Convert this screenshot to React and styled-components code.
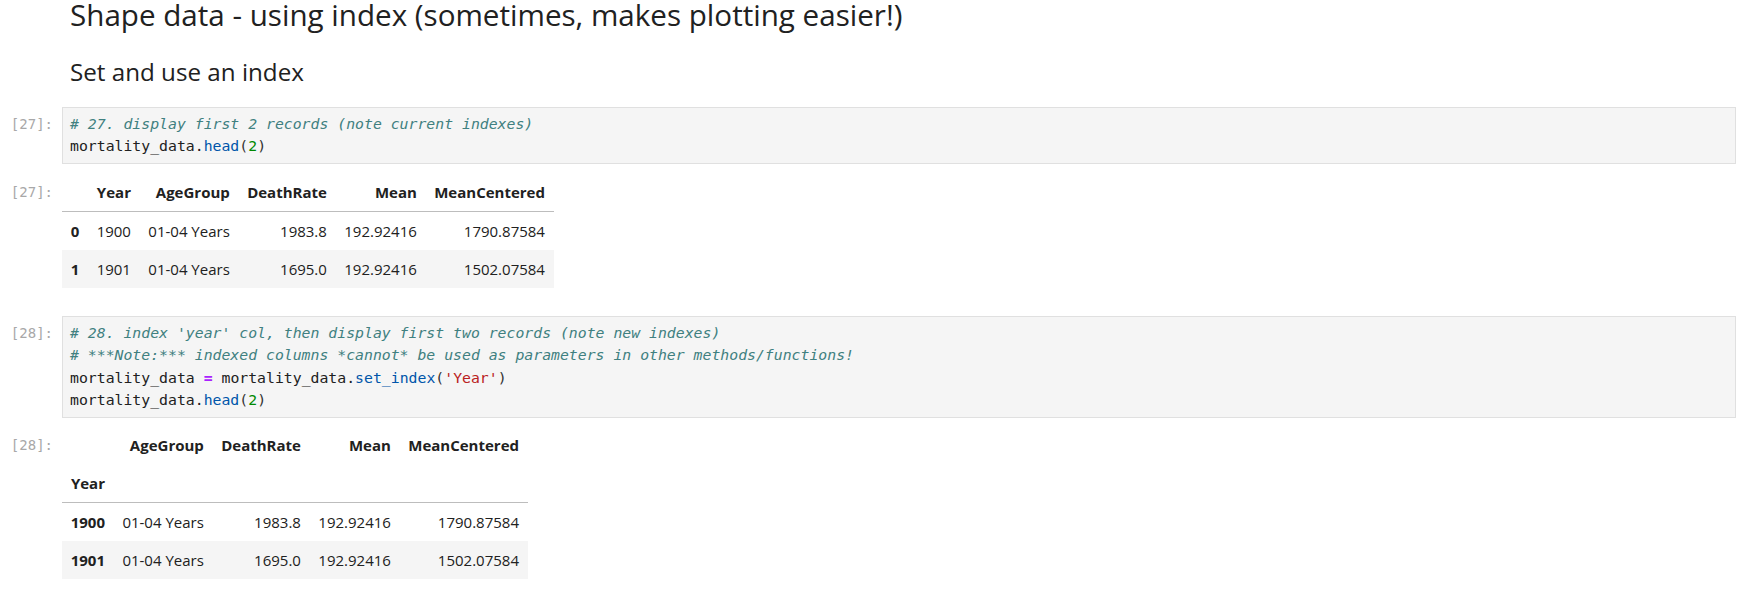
import React from 'react';
import styled, {createGlobalStyle, css} from 'styled-components';

const GlobalStyle = createGlobalStyle`
  body {
    margin: 0;
    background: #ffffff;
    font-family: "Open Sans", "Noto Sans", sans-serif;
    color: #212121;
  }
`;

const Notebook = styled.div`
  display: flex;
  flex-direction: column;
  padding-right: 8px;
`;

const Cell = styled.div`
  display: grid;
  grid-template-columns: 62px 1fr;
  align-items: start;
  margin-top: ${props => props.$top || 0}px;
`;

const Prompt = styled.div`
  font-family: "DejaVu Sans Mono", "Liberation Mono", monospace;
  font-size: 14px;
  color: #a8a8a8;
  text-align: right;
  padding-right: 9px;
  line-height: ${props => (props.$out ? '38px' : '22.5px')};
  padding-top: ${props => (props.$out ? 0 : 6)}px;
  white-space: pre;
`;

const Markdown = styled.div`
  padding-left: 8px;
`;

const Title = styled.h2`
  margin: 0;
  font-size: 29.6px;
  font-weight: 400;
  line-height: 30px;
  color: #212121;
`;

const Subtitle = styled.h3`
  margin: 27.3px 0 0;
  font-size: 24.2px;
  font-weight: 400;
  line-height: 30px;
  color: #212121;
`;

const CodeBox = styled.pre`
  margin: 0;
  background: #f5f5f5;
  border: 1px solid #e0e0e0;
  padding: 5px 7px;
  font-family: "DejaVu Sans Mono", "Liberation Mono", monospace;
  font-size: 14.8px;
  line-height: 22.5px;
  color: #212121;
`;

const tokenColors = {
  comment: css`
    color: #408080;
    font-style: italic;
  `,
  prop: css`color: #0055aa;`,
  num: css`color: #008800;`,
  str: css`color: #ba2121;`,
  op: css`
    color: #aa22ff;
    font-weight: bold;
  `,
  bracket: css`color: #333333;`,
};

const Tok = styled.span`
  ${props => tokenColors[props.$k]}
`;

const Table = styled.table`
  justify-self: start;
  border-collapse: collapse;
  border-spacing: 0;
  font-size: 15px;
  color: #212121;
`;

const Cellbase = css`
  height: 38px;
  padding: 0 8.7px;
  text-align: right;
  vertical-align: middle;
  white-space: nowrap;
`;

const Th = styled.th`
  ${Cellbase};
  font-weight: 700;
`;

const Td = styled.td`
  ${Cellbase};
  font-weight: 400;
`;

const HeadRow = styled.tr`
  ${props =>
    props.$last &&
    css`
      border-bottom: 1px solid #bdbdbd;
    `}
`;

const BodyRow = styled.tr`
  background: ${props => (props.$stripe ? '#f5f5f5' : 'transparent')};
`;

const rows = [
  {idx: '0', year: '1900', age: '01-04 Years', rate: '1983.8', mean: '192.92416', centered: '1790.87584'},
  {idx: '1', year: '1901', age: '01-04 Years', rate: '1695.0', mean: '192.92416', centered: '1502.07584'},
];

function FirstTable() {
  return (
    <Table>
      <thead>
        <HeadRow $last>
          <Th></Th>
          <Th>Year</Th>
          <Th>AgeGroup</Th>
          <Th>DeathRate</Th>
          <Th>Mean</Th>
          <Th>MeanCentered</Th>
        </HeadRow>
      </thead>
      <tbody>
        {rows.map((r, i) => (
          <BodyRow key={r.idx} $stripe={i % 2 === 1}>
            <Th>{r.idx}</Th>
            <Td>{r.year}</Td>
            <Td>{r.age}</Td>
            <Td>{r.rate}</Td>
            <Td>{r.mean}</Td>
            <Td>{r.centered}</Td>
          </BodyRow>
        ))}
      </tbody>
    </Table>
  );
}

function IndexedTable() {
  return (
    <Table>
      <thead>
        <HeadRow>
          <Th></Th>
          <Th>AgeGroup</Th>
          <Th>DeathRate</Th>
          <Th>Mean</Th>
          <Th>MeanCentered</Th>
        </HeadRow>
        <HeadRow $last>
          <Th>Year</Th>
          <Th></Th>
          <Th></Th>
          <Th></Th>
          <Th></Th>
        </HeadRow>
      </thead>
      <tbody>
        {rows.map((r, i) => (
          <BodyRow key={r.idx} $stripe={i % 2 === 1}>
            <Th>{r.year}</Th>
            <Td>{r.age}</Td>
            <Td>{r.rate}</Td>
            <Td>{r.mean}</Td>
            <Td>{r.centered}</Td>
          </BodyRow>
        ))}
      </tbody>
    </Table>
  );
}

export default function App() {
  return (
    <>
      <GlobalStyle/>
      <Notebook>
        <Cell>
          <Prompt/>
          <Markdown>
            <Title>Shape data - using index (sometimes, makes plotting easier!)</Title>
            <Subtitle>Set and use an index</Subtitle>
          </Markdown>
        </Cell>

        <Cell $top={19.7}>
          <Prompt>[27]:</Prompt>
          <CodeBox>
            <Tok $k="comment"># 27. display first 2 records (note current indexes)</Tok>{'\n'}
            mortality_data.<Tok $k="prop">head</Tok><Tok $k="bracket">(</Tok><Tok $k="num">2</Tok><Tok $k="bracket">)</Tok>
          </CodeBox>
        </Cell>
        <Cell $top={8.7}>
          <Prompt $out>[27]:</Prompt>
          <FirstTable/>
        </Cell>

        <Cell $top={28.3}>
          <Prompt>[28]:</Prompt>
          <CodeBox>
            <Tok $k="comment"># 28. index 'year' col, then display first two records (note new indexes)</Tok>{'\n'}
            <Tok $k="comment"># ***Note:*** indexed columns *cannot* be used as parameters in other methods/functions!</Tok>{'\n'}
            mortality_data <Tok $k="op">=</Tok> mortality_data.<Tok $k="prop">set_index</Tok><Tok $k="bracket">(</Tok><Tok $k="str">'Year'</Tok><Tok $k="bracket">)</Tok>{'\n'}
            mortality_data.<Tok $k="prop">head</Tok><Tok $k="bracket">(</Tok><Tok $k="num">2</Tok><Tok $k="bracket">)</Tok>
          </CodeBox>
        </Cell>
        <Cell $top={8.5}>
          <Prompt $out>[28]:</Prompt>
          <IndexedTable/>
        </Cell>
      </Notebook>
    </>
  );
}
